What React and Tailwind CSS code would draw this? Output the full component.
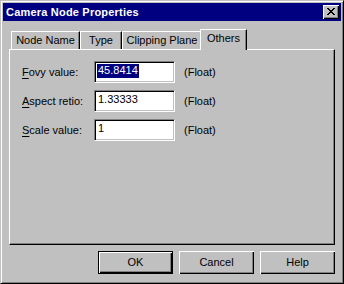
import React from "react";

function CloseGlyph() {
  const rows = [
    [0, 1, 6, 7],
    [1, 2, 5, 6],
    [2, 3, 4, 5],
    [3, 4],
    [2, 3, 4, 5],
    [1, 2, 5, 6],
    [0, 1, 6, 7],
  ];
  return (
    <svg width="8" height="7" viewBox="0 0 8 7" shapeRendering="crispEdges">
      {rows.map((cols, y) =>
        cols.map((x) => <rect key={`${x}-${y}`} x={x} y={y} width="1" height="1" fill="#000" />)
      )}
    </svg>
  );
}

function Tab({ label, w }) {
  return (
    <div
      className={`${w} h-[18px] flex items-center justify-center border-t border-l border-r border-t-white border-l-white border-r-black shadow-[inset_-1px_0_#808080] pb-[1px]`}
    >
      {label}
    </div>
  );
}

function Field({ label, mn, rest, value, selected }) {
  return (
    <div className="flex items-center h-[22px]">
      <div className="w-[72px]">
        <u className="underline-offset-2">{mn}</u>
        {rest}
      </div>
      <div className="w-[81px] h-[22px] bg-white border border-t-[#808080] border-l-[#808080] border-b-white border-r-white shadow-[inset_1px_1px_#000,inset_-1px_-1px_#c0c0c0] pl-[2px] pt-[2px]">
        {selected ? (
          <span className="inline-block bg-[#000080] text-white leading-[13px] h-[14px] px-[1px]">{value}</span>
        ) : (
          <span className="inline-block leading-[13px] h-[14px] px-[1px]">{value}</span>
        )}
      </div>
      <div className="ml-[9px]">(Float)</div>
    </div>
  );
}

function Btn({ children, def }) {
  return (
    <div
      className={
        def
          ? "w-[75px] h-[23px] border border-black shadow-[inset_1px_1px_#fff,inset_-1px_-1px_#000,inset_-2px_-2px_#808080] flex items-center justify-center"
          : "w-[75px] h-[23px] shadow-[inset_1px_1px_#fff,inset_-1px_-1px_#000,inset_-2px_-2px_#808080] flex items-center justify-center"
      }
    >
      {children}
    </div>
  );
}

export default function App() {
  return (
    <div
      className="w-[344px] h-[284px] bg-[#c0c0c0] border border-t-[#c0c0c0] border-l-[#c0c0c0] border-r-black border-b-black shadow-[inset_1px_1px_#fff,inset_-1px_-1px_#808080] p-[2px] flex flex-col text-[11px] text-black leading-[13px]"
      style={{ fontFamily: '"Liberation Sans", Arial, sans-serif' }}
    >
      <div className="h-[18px] bg-[#000080] flex items-center justify-between pl-[3px] pr-[2px]">
        <span className="text-white font-bold text-[11px] tracking-[0.2px]">Camera Node Properties</span>
        <div className="w-[16px] h-[14px] bg-[#c0c0c0] shadow-[inset_1px_1px_#fff,inset_-1px_-1px_#000,inset_-2px_-2px_#808080] flex items-center justify-center pr-[1px] pb-[1px]">
          <CloseGlyph />
        </div>
      </div>

      <div className="flex flex-col px-[6px] pt-[8px]">
        <div className="h-[20px] flex items-end pl-[2px]">
          <Tab label="Node Name" w="w-[69px]" />
          <Tab label="Type" w="w-[42px]" />
          <Tab label="Clipping Plane" w="w-[80px]" />
          <div className="relative z-10 w-[47px] h-[21px] -ml-[2px] -mb-[1px] bg-[#c0c0c0] flex items-center justify-center border-t border-l border-r border-t-white border-l-white border-r-black shadow-[inset_-1px_0_#808080] pb-[3px]">
            Others
          </div>
        </div>

        <div className="h-[196px] border border-t-white border-l-white border-r-black border-b-black shadow-[inset_-1px_-1px_#808080] pl-[12px] pt-[11px] flex flex-col gap-[7px]">
          <Field mn="F" rest="ovy value:" value="45.8414" selected />
          <Field mn="A" rest="spect retio:" value="1.33333" />
          <Field mn="S" rest="cale value:" value="1" />
        </div>

        <div className="flex justify-end gap-[6px] mt-[6px]">
          <Btn def>OK</Btn>
          <Btn>Cancel</Btn>
          <Btn>Help</Btn>
        </div>
      </div>
    </div>
  );
}
